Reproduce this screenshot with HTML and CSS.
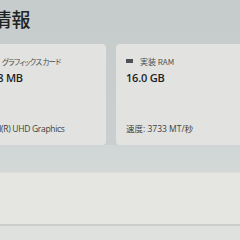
FILE: index.html
```html
<!DOCTYPE html>
<html lang="ja">
<head>
<meta charset="utf-8">
<link rel="stylesheet" href="styles.css">
</head>
<body>
<div class="page">
  <h1 class="title">デバイス情報</h1>
  <div class="cards">
    <div class="card card-left">
      <div class="label"><span class="icon gpu"></span><span class="kana">グラフィックス カード</span></div>
      <div class="value">128 MB</div>
      <div class="sub narrow">Intel(R) UHD Graphics</div>
    </div>
    <div class="card card-right">
      <div class="label"><span class="icon ram"></span><span>実装 RAM</span></div>
      <div class="value">16.0 GB</div>
      <div class="sub">速度: 3733 MT/秒</div>
    </div>
  </div>
  <div class="band"></div>
  <div class="panel"></div>
  <div class="bottom"></div>
</div>
</body>
</html>
```
FILE: styles.css
```css
html, body {
  margin: 0;
  padding: 0;
  width: 240px;
  height: 240px;
  overflow: hidden;
  background: #cbcfcf;
}
.page {
  width: 240px;
  height: 240px;
  overflow: hidden;
  font-family: "Open Sans", "Noto Sans CJK JP", sans-serif;
  background: linear-gradient(180deg, #c6cbcb 0%, #cdd1d1 100%);
}
.title {
  margin: 6px 0 0 -83px;
  height: 27px;
  font-family: "Noto Sans CJK JP", sans-serif;
  font-size: 19px;
  font-weight: 500;
  line-height: 25px;
  color: #202324;
  white-space: nowrap;
}
.cards {
  display: flex;
  gap: 10px;
  margin: 11px 0 0 -25px;
  height: 101px;
}
.card {
  flex: none;
  box-sizing: border-box;
  height: 101px;
  background: #e2e3e0;
  border-radius: 4px;
  padding: 11px 10px 0 10px;
  display: flex;
  flex-direction: column;
}
.card-left { width: 131px; }
.card-right { width: 150px; }
.label {
  display: flex;
  align-items: center;
  gap: 6px;
  height: 12px;
  font-family: "Noto Sans CJK JP", sans-serif;
  font-feature-settings: "palt";
  font-size: 8px;
  color: #4b4e4f;
  white-space: nowrap;
}
.kana {
  font-size: 7.5px;
  letter-spacing: -0.7px;
}
.icon {
  width: 8px;
  height: 5px;
  border: 1px solid #4e5152;
  box-sizing: border-box;
  flex: none;
}
.gpu {
  width: 10px;
  height: 7px;
  margin-right: 1px;
}
.ram {
  background: #4e5152;
  height: 4px;
  width: 7px;
  margin-right: 1px;
}
.value {
  margin-top: 4px;
  font-size: 11px;
  font-weight: 600;
  letter-spacing: -0.2px;
  line-height: 14px;
  color: #1e2122;
  white-space: nowrap;
}
.sub {
  margin-top: 38px;
  font-size: 8.5px;
  line-height: 12px;
  color: #3d4041;
  font-family: "Open Sans", "Noto Sans CJK JP", sans-serif;
  white-space: nowrap;
}
.narrow {
  letter-spacing: -0.3px;
}
.band {
  height: 27px;
  background: linear-gradient(180deg, #d0d5d5, #d4d9d8);
}
.panel {
  height: 52px;
  background: #e5e6e2;
  border-top: 1px solid #dadcd9;
  box-sizing: border-box;
}
.bottom {
  height: 16px;
  border-top: 2px solid #c9cdcc;
  background: #dfe1de;
}
```
